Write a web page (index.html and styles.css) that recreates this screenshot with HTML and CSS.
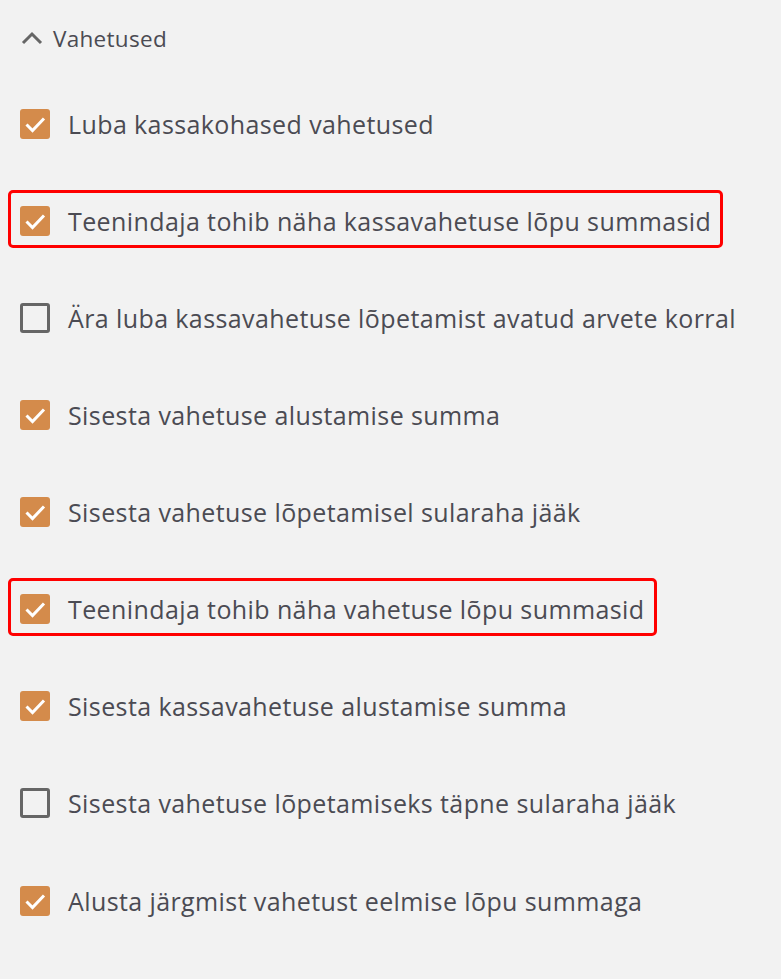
FILE: index.html
```html
<!DOCTYPE html>
<html lang="et">
<head>
<meta charset="utf-8">
<title>Vahetused</title>
<link rel="stylesheet" href="styles.css">
</head>
<body>
<section class="panel">
  <div class="section-header">
    <svg class="chevron" width="22" height="14" viewBox="0 0 22 14"><path d="M2 12 L11 3 L20 12" fill="none" stroke="#666" stroke-width="3"/></svg>
    <span class="section-title">Vahetused</span>
  </div>
  <ul class="options">
    <li class="option"><span class="box checked"><svg viewBox="0 0 30 30" width="30" height="30"><path d="M6.5 15.5 L12.5 21.5 L24 9.5" fill="none" stroke="#fff" stroke-width="3"/></svg></span><span class="label">Luba kassakohased vahetused</span></li>
    <li class="option"><span class="highlight"><span class="box checked"><svg viewBox="0 0 30 30" width="30" height="30"><path d="M6.5 15.5 L12.5 21.5 L24 9.5" fill="none" stroke="#fff" stroke-width="3"/></svg></span><span class="label">Teenindaja tohib näha kassavahetuse lõpu summasid</span></span></li>
    <li class="option"><span class="box"></span><span class="label">Ära luba kassavahetuse lõpetamist avatud arvete korral</span></li>
    <li class="option"><span class="box checked"><svg viewBox="0 0 30 30" width="30" height="30"><path d="M6.5 15.5 L12.5 21.5 L24 9.5" fill="none" stroke="#fff" stroke-width="3"/></svg></span><span class="label">Sisesta vahetuse alustamise summa</span></li>
    <li class="option"><span class="box checked"><svg viewBox="0 0 30 30" width="30" height="30"><path d="M6.5 15.5 L12.5 21.5 L24 9.5" fill="none" stroke="#fff" stroke-width="3"/></svg></span><span class="label">Sisesta vahetuse lõpetamisel sularaha jääk</span></li>
    <li class="option"><span class="highlight"><span class="box checked"><svg viewBox="0 0 30 30" width="30" height="30"><path d="M6.5 15.5 L12.5 21.5 L24 9.5" fill="none" stroke="#fff" stroke-width="3"/></svg></span><span class="label">Teenindaja tohib näha vahetuse lõpu summasid</span></span></li>
    <li class="option"><span class="box checked"><svg viewBox="0 0 30 30" width="30" height="30"><path d="M6.5 15.5 L12.5 21.5 L24 9.5" fill="none" stroke="#fff" stroke-width="3"/></svg></span><span class="label">Sisesta kassavahetuse alustamise summa</span></li>
    <li class="option"><span class="box"></span><span class="label">Sisesta vahetuse lõpetamiseks täpne sularaha jääk</span></li>
    <li class="option"><span class="box checked"><svg viewBox="0 0 30 30" width="30" height="30"><path d="M6.5 15.5 L12.5 21.5 L24 9.5" fill="none" stroke="#fff" stroke-width="3"/></svg></span><span class="label">Alusta järgmist vahetust eelmise lõpu summaga</span></li>
  </ul>
</section>
</body>
</html>
```

FILE: styles.css
```css
html, body {
  margin: 0;
  padding: 0;
  background: #f2f2f2;
}
body {
  font-family: "Open Sans", "Noto Sans", sans-serif;
  color: #4b4b53;
}
.panel {
  padding: 23px 0 0 20px;
}
.section-header {
  display: flex;
  align-items: center;
  height: 30px;
  gap: 10px;
}
.chevron {
  display: block;
  margin-left: 1px;
}
.section-title {
  font-size: 22.5px;
  letter-spacing: 0.3px;
}
.options {
  list-style: none;
  margin: 22px 0 0 0;
  padding: 0;
}
.option {
  display: flex;
  align-items: center;
  height: 97.125px;
}
.highlight {
  box-sizing: border-box;
  display: flex;
  align-items: center;
  margin: -4px 0 0 -12px;
  padding: 4px 9px 0 9px;
  height: 58px;
  border: 3px solid #ff0000;
  border-radius: 5px;
}
.box {
  box-sizing: border-box;
  width: 30px;
  height: 30px;
  border-radius: 3px;
  border: 3px solid #666;
  flex: none;
  margin-right: 18px;
}
.box.checked {
  border: none;
  background: #d48b4b;
}
.box svg {
  display: block;
}
.label {
  font-size: 25px;
  letter-spacing: 0.4px;
  white-space: nowrap;
}
```
